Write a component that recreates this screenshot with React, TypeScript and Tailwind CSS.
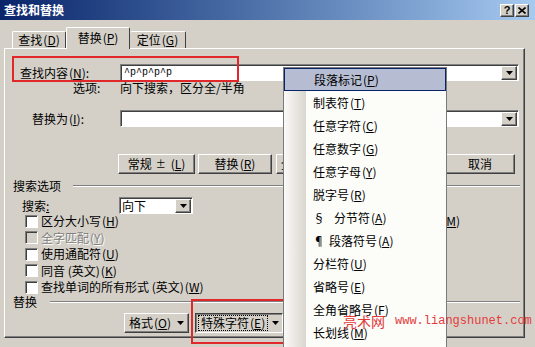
import React from 'react';

const raised =
  'border border-t-white border-l-white border-r-[#404040] border-b-[#404040] shadow-[inset_-1px_-1px_0_#808080]';
const sunken =
  'border border-t-[#808080] border-l-[#808080] border-r-white border-b-white shadow-[inset_1px_1px_0_#404040]';

const Key = ({ k }: { k: string }) => (
  <span className="ml-[1px]">
    (<span className="underline underline-offset-1">{k}</span>)
  </span>
);

const Arrow = () => (
  <svg width="7" height="4" viewBox="0 0 7 4">
    <polygon points="0,0 7,0 3.5,4" fill="#000" />
  </svg>
);

const DropBtn = () => (
  <div className={`w-[16px] h-[14px] flex items-center justify-center bg-[#d4d0c8] ${raised}`}>
    <Arrow />
  </div>
);

const Check = ({ label, k, disabled }: { label: string; k: string; disabled?: boolean }) => (
  <div className="flex items-center">
    <div className={`w-[13px] h-[13px] ${disabled ? 'bg-[#d4d0c8]' : 'bg-white'} ${sunken}`} />
    <span
      className={`ml-[3px] leading-[14px] ${
        disabled ? 'text-[#808080] [text-shadow:1px_1px_0_#fff]' : ''
      }`}
    >
      {label}
      <Key k={k} />
    </span>
  </div>
);

const menuItems: { pre?: string; label: string; k: string }[] = [
  { label: '段落标记', k: 'P' },
  { label: '制表符', k: 'T' },
  { label: '任意字符', k: 'C' },
  { label: '任意数字', k: 'G' },
  { label: '任意字母', k: 'Y' },
  { label: '脱字号', k: 'R' },
  { pre: '§', label: '分节符', k: 'A' },
  { pre: '¶', label: '段落符号', k: 'A' },
  { label: '分栏符', k: 'U' },
  { label: '省略号', k: 'E' },
  { label: '全角省略号', k: 'F' },
  { label: '长划线', k: 'M' },
];

export default function App() {
  return (
    <div className="relative w-[535px] h-[347px] overflow-hidden bg-[#d4d0c8] text-[12px] text-black font-['Noto_Sans_CJK_SC','Liberation_Sans',sans-serif]">
      {/* title bar */}
      <div className="h-[20px] flex items-center justify-between pl-[4px] pr-[6px] bg-linear-to-r from-[#0a246a] to-[#a6caf0]">
        <span className="text-white font-bold leading-[14px]">查找和替换</span>
        <div className="flex gap-[1px]">
          <div className={`w-[14px] h-[13px] bg-[#d4d0c8] flex items-center justify-center ${raised}`}>
            <span className="font-['Liberation_Sans',sans-serif] font-bold text-[11px] leading-[11px]">?</span>
          </div>
          <div className={`w-[14px] h-[13px] bg-[#d4d0c8] flex items-center justify-center ${raised}`}>
            <svg width="8" height="7" viewBox="0 0 8 7">
              <path d="M0.5 0.5 L7.5 6.5 M7.5 0.5 L0.5 6.5" stroke="#000" strokeWidth="1.6" />
            </svg>
          </div>
        </div>
      </div>

      {/* tabs */}
      <div className="h-[28px] flex items-end pl-[12px]">
        <div className="w-[54px] h-[17px] flex items-center justify-center border-t border-l border-t-white border-l-white border-r border-r-[#404040] rounded-t-[2px] leading-[14px]">
          查找<Key k="D" />
        </div>
        <div className="relative z-10 -mb-px w-[64px] h-[22px] flex items-center justify-center bg-[#d4d0c8] border-t border-l border-t-white border-l-white border-r border-r-[#404040] rounded-t-[2px] leading-[14px] pb-[2px]">
          替换<Key k="P" />
        </div>
        <div className="w-[56px] h-[17px] flex items-center justify-center border-t border-r border-t-white border-r-[#404040] rounded-t-[2px] leading-[14px]">
          定位<Key k="G" />
        </div>
      </div>

      {/* tab panel */}
      <div className={`ml-[4px] w-[521px] h-[290px] flex flex-col ${raised}`}>
        <div className="mt-[15px] h-[17px] flex">
          <div className="w-[115px] pl-[15px] flex items-center leading-[14px]">
            查找内容<Key k="N" />:
          </div>
          <div className={`w-[399px] bg-white flex items-center justify-between pl-[3px] pr-[1px] ${sunken}`}>
            <span className="font-['Liberation_Mono',monospace] text-[10px] leading-[12px]">^p^p^p^p</span>
            <DropBtn />
          </div>
        </div>
        <div className="h-[14px] flex items-center leading-[14px]">
          <div className="w-[115px] pl-[68px]">选项:</div>
          <div>向下搜索，区分全/半角</div>
        </div>
        <div className="mt-[15px] h-[17px] flex">
          <div className="w-[115px] pl-[27px] flex items-center leading-[14px]">
            替换为<Key k="I" />:
          </div>
          <div className={`w-[399px] bg-white flex items-center justify-end pr-[1px] ${sunken}`}>
            <DropBtn />
          </div>
        </div>

        <div className="mt-[27px] h-[20px] flex pl-[113px]">
          <div className={`w-[77px] flex items-center justify-center leading-[14px] ${raised}`}>
            常规 <span className="mx-[4px] text-[10px]">±</span>
            <Key k="L" />
          </div>
          <div className={`ml-[3px] w-[74px] flex items-center justify-center leading-[14px] ${raised}`}>
            替换<Key k="R" />
          </div>
          <div className={`ml-[4px] w-[74px] flex items-center justify-center leading-[14px] ${raised}`}>
            全部替换<Key k="A" />
          </div>
          <div className={`ml-[4px] w-[87px] flex items-center justify-center leading-[14px] ${raised}`}>
            查找下一处<Key k="F" />
          </div>
          <div className={`ml-[4px] w-[70px] flex items-center justify-center leading-[14px] ${raised}`}>
            取消
          </div>
        </div>

        <div className="mt-[5px] h-[14px] flex items-center pl-[8px] pr-[4px]">
          <span className="leading-[14px]">搜索选项</span>
          <div className="ml-[12px] flex-1 h-[2px] border-t border-t-[#808080] border-b border-b-white" />
        </div>

        <div className="mt-[4px] h-[17px] flex">
          <div className="w-[114px] pl-[17px] flex items-center leading-[14px]">
            搜索<span className="underline">:</span>
          </div>
          <div className={`w-[74px] bg-white flex items-center justify-between pl-[2px] pr-[1px] ${sunken}`}>
            <span className="leading-[14px]">向下</span>
            <DropBtn />
          </div>
        </div>

        <div className="-mt-px flex flex-col pl-[20px]">
          <div className="h-[16.5px] flex items-center">
            <Check label="区分大小写" k="H" />
            <div className="ml-auto mr-[64px]">
              <Check label="区分全/半角" k="M" />
            </div>
          </div>
          <div className="h-[16.5px] flex items-center">
            <Check label="全字匹配" k="Y" disabled />
          </div>
          <div className="h-[16.5px] flex items-center">
            <Check label="使用通配符" k="U" />
          </div>
          <div className="h-[16.5px] flex items-center">
            <Check label="同音 (英文)" k="K" />
          </div>
          <div className="h-[16.5px] flex items-center">
            <Check label="查找单词的所有形式 (英文)" k="W" />
          </div>
        </div>

        <div className="h-[12.5px] flex items-center pl-[8px] pr-[4px]">
          <span className="leading-[14px]">替换</span>
          <div className="ml-[13px] flex-1 h-[2px] border-t border-t-[#808080] border-b border-b-white" />
        </div>

        <div className="mt-[5px] h-[20px] flex pl-[119px]">
          <div className={`w-[65px] flex items-center justify-center gap-[6px] leading-[14px] ${raised}`}>
            <span>
              格式<Key k="O" />
            </span>
            <Arrow />
          </div>
          <div className="ml-[6px] w-[88px] flex items-center pl-[3px] pr-[3px] border border-t-[#404040] border-l-[#404040] border-r-white border-b-white shadow-[inset_1px_1px_0_#808080]">
            <span className="px-[2px] leading-[14px] outline-1 outline-dotted outline-black">
              特殊字符<Key k="E" />
            </span>
            <span className="ml-auto">
              <Arrow />
            </span>
          </div>
        </div>
      </div>

      {/* red highlight boxes */}
      <div className="absolute left-[12px] top-[56px] w-[227px] h-[26px] border-2 border-[#e0282a]" />
      <div className="absolute left-[191px] top-[299px] w-[104px] h-[45px] border-2 border-[#e0282a]" />

      {/* popup menu */}
      <div className="absolute left-[283px] top-[67px] w-[164px] h-[290px] border border-[#7a7a7a] bg-[#fcfcf9]">
        <div className="absolute left-0 top-0 bottom-0 w-[22px] bg-linear-to-r from-[#fbfaf8] to-[#d9d6cf]" />
        <div className="relative flex flex-col">
          {menuItems.map((it, i) => (
            <div
              key={i}
              className={`h-[23px] flex items-center pl-[29px] leading-[14px] ${
                i === 0 ? 'bg-[#b6bdd2] border border-[#0a246a] pl-[28px]' : ''
              }`}
            >
              {it.pre && <span className={it.pre === '§' ? 'mr-[9px]' : 'mr-[4px]'}>{it.pre}</span>}
              {it.label}
              <Key k={it.k} />
            </div>
          ))}
        </div>
      </div>

      {/* watermark */}
      <div className="absolute left-[343px] top-[313px] flex items-center text-[#e33b3b]">
        <span className="text-[14px] leading-[16px]">亮术网</span>
        <span className="ml-[10px] font-['Liberation_Mono',monospace] text-[12px] leading-[16px]">
          www.liangshunet.com
        </span>
      </div>
    </div>
  );
}
